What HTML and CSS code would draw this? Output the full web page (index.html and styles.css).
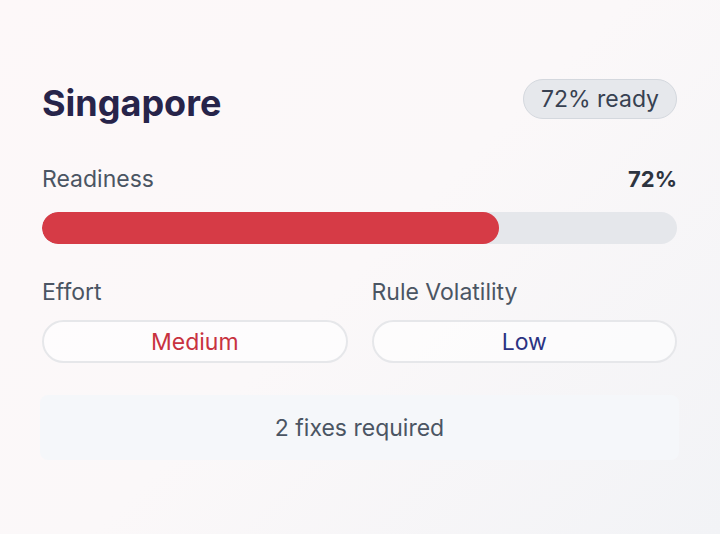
FILE: index.html
```html
<!DOCTYPE html>
<html lang="en">
<head>
<meta charset="utf-8">
<title>Singapore readiness</title>
<link rel="stylesheet" href="styles.css">
</head>
<body>
<main class="card">
  <header class="card-head">
    <h1 class="title">Singapore</h1>
    <span class="badge">72% ready</span>
  </header>
  <section class="readiness">
    <div class="row">
      <span class="label">Readiness</span>
      <span class="value">72%</span>
    </div>
    <div class="track"><div class="fill" style="width:72%"></div></div>
  </section>
  <section class="metrics">
    <div class="metric">
      <span class="label">Effort</span>
      <span class="chip chip-red">Medium</span>
    </div>
    <div class="metric">
      <span class="label">Rule Volatility</span>
      <span class="chip chip-navy">Low</span>
    </div>
  </section>
  <div class="fixes">2 fixes required</div>
</main>
</body>
</html>
```
FILE: styles.css
```css
* { box-sizing: border-box; }
html, body { margin: 0; padding: 0; }
body {
  width: 720px;
  height: 534px;
  font-family: Inter, "Noto Sans", sans-serif;
  background: linear-gradient(135deg, #fdf8f9 0%, #fbf8f9 50%, #f2f3f6 100%);
}
.card {
  height: 534px;
  padding: 79px 43px 0 42px;
  display: flex;
  flex-direction: column;
}
.card-head {
  display: flex;
  justify-content: space-between;
  align-items: flex-start;
}
.title {
  margin: 0;
  font-size: 36px;
  font-weight: 700;
  color: #27244a;
  line-height: 48px;
}
.badge {
  height: 40px;
  padding: 0 17px;
  border-radius: 20px;
  background: #e6e8ec;
  border: 1.5px solid #d4d8de;
  color: #374151;
  font-size: 23px;
  display: flex;
  align-items: center;
}
.readiness { margin-top: 38px; }
.row {
  display: flex;
  justify-content: space-between;
  align-items: center;
  line-height: 28px;
}
.label {
  font-size: 23px;
  color: #4b5563;
  line-height: 28px;
}
.value {
  font-size: 22px;
  font-weight: 700;
  color: #2d3440;
}
.track {
  margin-top: 19px;
  height: 32px;
  border-radius: 16px;
  background: #e5e7eb;
  overflow: hidden;
}
.fill {
  height: 100%;
  border-radius: 16px;
  background: #d63b46;
}
.metrics {
  margin-top: 34px;
  display: grid;
  grid-template-columns: 1fr 1fr;
  gap: 24px;
}
.metric {
  display: flex;
  flex-direction: column;
  gap: 14px;
}
.chip {
  height: 43px;
  border-radius: 22px;
  border: 2px solid #e6e7ea;
  background: rgba(255,255,255,0.6);
  display: flex;
  align-items: center;
  justify-content: center;
  font-size: 23px;
}
.chip-red { color: #c8323f; }
.chip-navy { color: #2b3382; }
.fixes {
  margin-top: 32px;
  margin-left: -2px;
  margin-right: -2px;
  height: 65px;
  border-radius: 8px;
  background: #f5f7fa;
  display: flex;
  align-items: center;
  justify-content: center;
  font-size: 23px;
  color: #4b5563;
}
```
